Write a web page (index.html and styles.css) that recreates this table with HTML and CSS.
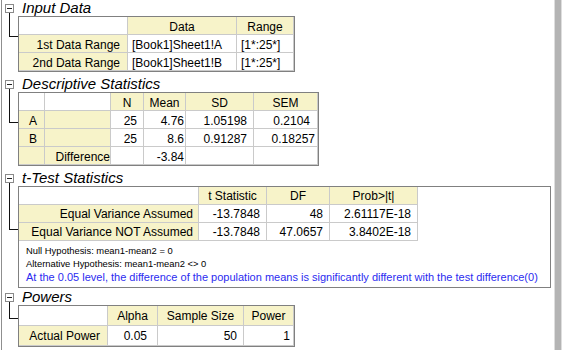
FILE: index.html
```html
<!DOCTYPE html>
<html>
<head>
<meta charset="utf-8">
<title>t-Test Report</title>
<link rel="stylesheet" href="styles.css">
</head>
<body>
<div class="page">
  <div class="report">
    <section class="sec">
      <div class="gutter"><span class="toggle"></span><span class="elbow elbow-input"></span></div>
      <div class="body">
        <div class="title">Input Data</div>
        <table class="grid t-input">
          <colgroup><col class="c109"><col class="c109"><col class="c57"></colgroup>
          <tr><td class="blank"></td><th class="hc">Data</th><th class="hc">Range</th></tr>
          <tr><th class="rh">1st Data Range</th><td class="l">[Book1]Sheet1!A</td><td class="l">[1*:25*]</td></tr>
          <tr><th class="rh">2nd Data Range</th><td class="l">[Book1]Sheet1!B</td><td class="l">[1*:25*]</td></tr>
        </table>
      </div>
    </section>

    <section class="sec">
      <div class="gutter"><span class="toggle"></span><span class="elbow elbow-desc"></span></div>
      <div class="body">
        <div class="title">Descriptive Statistics</div>
        <table class="grid t-desc">
          <colgroup><col class="c26"><col class="c66"><col class="c33"><col class="c42"><col class="c68"><col class="c64"></colgroup>
          <tr><td class="blank"></td><td class="blank"></td><th class="hc">N</th><th class="hc">Mean</th><th class="hc">SD</th><th class="hc">SEM</th></tr>
          <tr><th class="rh pr7">A</th><th></th><td>25</td><td class="pr1">4.76</td><td>1.05198</td><td class="pr7">0.2104</td></tr>
          <tr><th class="rh pr7">B</th><th></th><td>25</td><td class="pr1">8.6</td><td>0.91287</td><td class="pr2">0.18257</td></tr>
          <tr><th></th><th class="rh pr0">Difference</th><td></td><td class="pr1">-3.84</td><td></td><td></td></tr>
        </table>
      </div>
    </section>

    <section class="sec">
      <div class="gutter"><span class="toggle"></span><span class="elbow elbow-ttest"></span></div>
      <div class="body">
        <div class="title">t-Test Statistics</div>
        <div class="tbox">
          <table class="grid t-test">
            <colgroup><col class="c180"><col class="c68"><col class="c63"><col class="c88"></colgroup>
            <tr><td class="blank"></td><th class="hc">t Statistic</th><th class="hc">DF</th><th class="hc">Prob&gt;|t|</th></tr>
            <tr><th class="rh pr5">Equal Variance Assumed</th><td>-13.7848</td><td>48</td><td>2.61117E-18</td></tr>
            <tr><th class="rh pr5">Equal Variance NOT Assumed</th><td>-13.7848</td><td>47.0657</td><td>3.8402E-18</td></tr>
          </table>
          <div class="notes">
            <div class="note">Null Hypothesis: mean1-mean2 = 0</div>
            <div class="note">Alternative Hypothesis: mean1-mean2 &lt;&gt; 0</div>
            <div class="concl">At the 0.05 level, the difference of the population means is significantly different with the test difference(0)</div>
          </div>
        </div>
      </div>
    </section>

    <section class="sec sec-last">
      <div class="gutter"><span class="toggle"></span><span class="elbow elbow-pow"></span></div>
      <div class="body">
        <div class="title">Powers</div>
        <table class="grid t-pow">
          <colgroup><col class="c89"><col class="c50"><col class="c86"><col class="c50"></colgroup>
          <tr><td class="blank"></td><th class="hc">Alpha</th><th class="hc">Sample Size</th><th class="hc">Power</th></tr>
          <tr><th class="rh">Actual Power</th><td class="pr10">0.05</td><td>50</td><td class="pr3">1</td></tr>
        </table>
      </div>
    </section>
  </div>
  <div class="split"></div>
</div>
</body>
</html>
```
FILE: styles.css
```css
body {
  margin: 0;
  background: #fff;
  color: #000;
  font-family: "Liberation Sans", Arial, sans-serif;
}

.page {
  display: flex;
  height: 350px;
  overflow: hidden;
}

.report {
  margin-left: 1px;
  width: 553px;
  box-sizing: border-box;
  border-left: 1px solid #8f8f8f;
  display: flex;
  flex-direction: column;
}

.split {
  width: 6px;
  flex: none;
  background: #b4b4b4;
  border-left: 1px solid #dedede;
  border-right: 1px solid #dedede;
}

.sec {
  display: flex;
}

.sec + .sec {
  margin-top: 4px;
}

.sec.sec-last {
  margin-top: 1px;
}

.gutter {
  width: 16px;
  flex: none;
  display: flex;
  flex-direction: column;
}

.toggle {
  width: 9px;
  height: 9px;
  box-sizing: border-box;
  border: 1px solid #8a8a8a;
  margin: 4px 0 0 3px;
  background: #fff;
  display: flex;
  align-items: center;
  justify-content: center;
}

.toggle::after {
  content: "";
  width: 5px;
  height: 1px;
  background: #222;
}

.elbow {
  margin-left: 7px;
  width: 9px;
  box-sizing: border-box;
  border-left: 1px solid #111;
  border-bottom: 1px solid #111;
}

.elbow-input { height: 24px; }
.elbow-desc { height: 34px; }
.elbow-ttest { height: 47px; }
.elbow-pow { height: 17px; }

.body {
  flex: none;
}

.title {
  font-style: italic;
  font-size: 15px;
  line-height: 16px;
  height: 16px;
  padding-left: 4px;
  white-space: nowrap;
}

.grid {
  border-collapse: separate;
  border-spacing: 0;
  table-layout: fixed;
  border: 1px solid #808080;
  font-size: 12px;
}

.grid td,
.grid th {
  box-sizing: border-box;
  height: 18px;
  padding: 0 6px 0 4px;
  line-height: 14px;
  vertical-align: bottom;
  border-right: 1px solid #cacaca;
  border-bottom: 1px solid #cacaca;
  font-weight: normal;
  white-space: nowrap;
  overflow: hidden;
  text-align: right;
  background: #fff;
}

.grid th {
  background: #f7f3c9;
}

.grid th.hc {
  text-align: center;
  padding: 0 2px;
}

.grid td.l {
  text-align: left;
  padding-left: 4px;
}

.grid .rh { padding-right: 7px; }
.grid .pr0 { padding-right: 0; }
.grid .pr1 { padding-right: 1px; }
.grid .pr2 { padding-right: 2px; }
.grid .pr3 { padding-right: 3px; }
.grid .pr5 { padding-right: 5px; }
.grid .pr7 { padding-right: 7px; }
.grid .pr10 { padding-right: 10px; }

.c26 { width: 26px; }
.c33 { width: 33px; }
.c42 { width: 42px; }
.c50 { width: 50px; }
.c57 { width: 57px; }
.c63 { width: 63px; }
.c64 { width: 64px; }
.c66 { width: 66px; }
.c68 { width: 68px; }
.c86 { width: 86px; }
.c88 { width: 88px; }
.c89 { width: 89px; }
.c109 { width: 109px; }
.c180 { width: 180px; }

.t-input { width: 277px; }
.t-desc { width: 301px; }
.t-pow { width: 277px; }

.tbox {
  width: 533px;
  box-sizing: border-box;
  border: 1px solid #808080;
}

.tbox .grid {
  border: none;
  width: 399px;
}

.t-test td,
.t-test th {
  vertical-align: middle;
}

.t-pow td,
.t-pow th {
  height: 20px;
  vertical-align: middle;
}

.notes {
  padding: 3px 0 2px 7px;
}

.note {
  font-size: 9.4px;
  line-height: 13px;
  white-space: nowrap;
}

.concl {
  font-size: 11px;
  line-height: 15px;
  color: #2b2bf0;
  white-space: nowrap;
}
```
